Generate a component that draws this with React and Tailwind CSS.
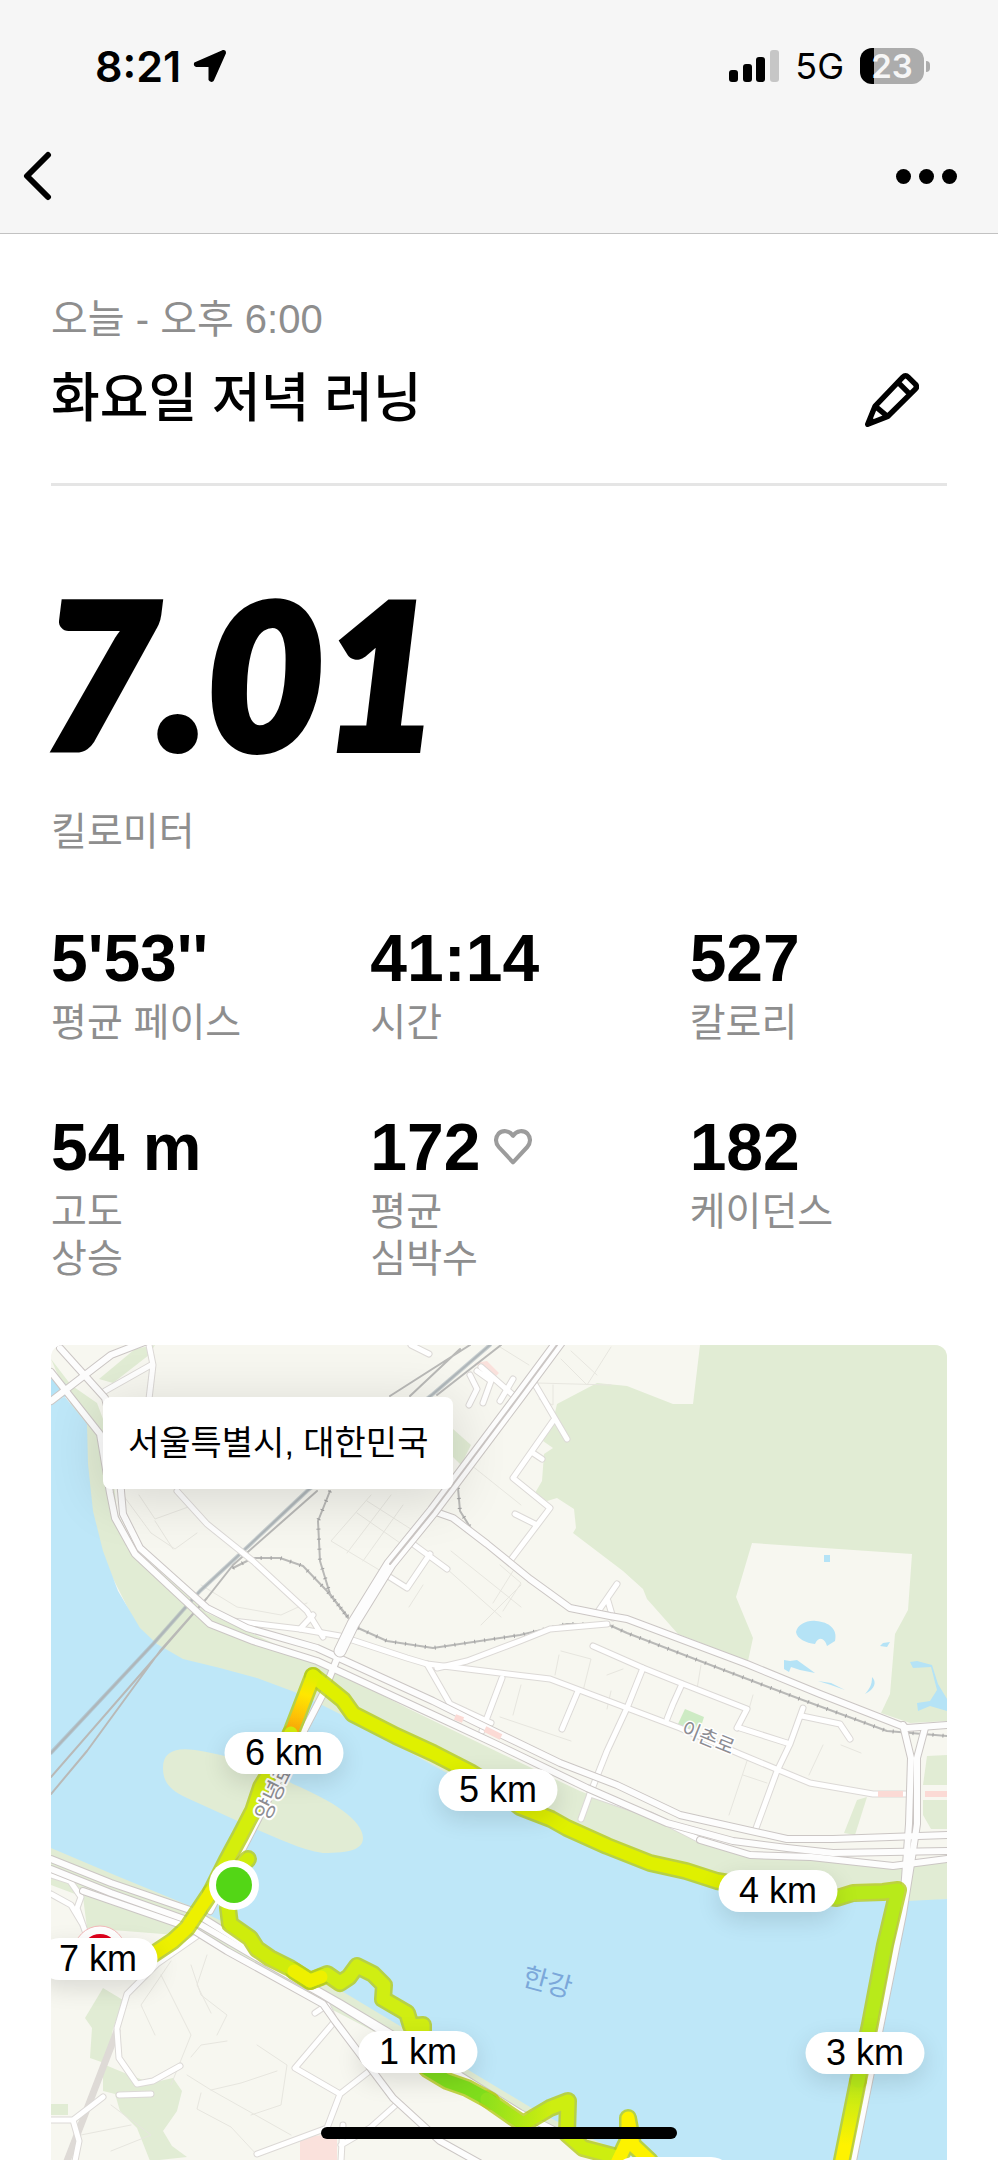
import React from 'react';

const MAP_WIDTH = 896;
const MAP_HEIGHT = 816;

const stats = [
  { value: "5'53''", label: ['평균 페이스'] },
  { value: '41:14', label: ['시간'] },
  { value: '527', label: ['칼로리'] },
  { value: '54 m', label: ['고도', '상승'] },
  { value: '172', label: ['평균', '심박수'], heart: true },
  { value: '182', label: ['케이던스'] },
];

// Kilometre markers, in map units
const markers = [
  { km: 1, x: 367, y: 707 },
  { km: 3, x: 814, y: 708 },
  { km: 4, x: 727, y: 546 },
  { km: 5, x: 447, y: 445 },
  { km: 6, x: 233, y: 408 },
  { km: 7, x: 47, y: 614 },
];

const parks = [
  'M649 0L642 59H622L576 41L546 38L506 59L502 76L492 96L502 103L493 109L491 136L484 148L496 156L506 153L523 164L525 183L522 188L572 226L592 244L596 254L627 289L697 316L702 293L685 252L701 198L861 209L857 265L844 289L839 349L830 368L859 378L896 376V0Z',
  'M0 14L20 40L46 58L58 90L66 168L86 206L156 268L222 298L279 323L356 363L449 408L529 446L649 493L699 509L842 521L896 514V554L856 558L666 545L516 490L356 410L249 355L132 318L89 287L30 170L20 60Z',
  'M48 34L84 4L104 0L98 10L62 38Z',
  'M402 84L420 100L410 120L400 110Z',
  'M0 500L66 526L140 556L202 586L236 610L349 678L469 752L566 806L560 812L440 762L349 700L280 664L150 592L36 583L32 552L0 540Z',
  'M52 643L72 655L62 684L56 719L39 713L41 683L34 673Z',
  'M52 719L76 729L100 738L122 733L131 746L126 766L112 786L121 801L136 812L99 816L86 783L69 766L64 749L52 746Z',
  'M0 759H17V770H0Z',
  'M876 411L896 410V484L880 484L872 470V455H896V440H872Z',
  'M806 455L816 452L804 490L793 488Z',
];

const smallStreets = [
  'M88 150L104 174L140 161M72 150L100 188L124 204L146 188M104 176L122 204M150 240L186 262L230 270L256 258',
  'M320 150L280 196L330 226L360 190M340 150L296 208M352 160L312 216M306 168L352 200M316 156L366 188',
  'M400 206L470 262M372 240L358 262M420 120L470 160M430 280L470 240M396 224L450 272',
  'M449 2L478 20M502 40V60L488 54M510 14L536 40L560 2M520 6L546 30M486 38L560 40',
  'M449 220L470 238L452 266M462 226L442 258M508 310L504 330M510 306L540 314L532 346M556 330L572 324',
  'M449 372L520 396M470 340L462 370M650 320L646 344M702 350L698 364M696 416L678 470M692 430L716 438',
  'M772 400L758 430M790 400L810 408M560 346L556 364M120 616L90 660L104 690M140 620L150 650L176 670L166 690',
  'M156 610L146 640L160 668M110 630L140 690L120 740M206 700L236 720L230 760L200 770M160 745L190 738L226 726',
  'M150 748L146 764L180 782L206 810M136 730L160 745L240 790M60 760L100 790L60 806M80 780L30 790M176 696L150 700L140 712',
];

const localRoads = [
  'M126 146L156 179L202 216L256 266L272 292M249 284L262 270',
  'M182 276L249 284L289 291L356 313L376 319L449 328L499 334L576 363L629 383L689 409L759 438L822 449H856',
  'M386 323L416 316L469 296L499 284L556 279',
  'M376 319L399 359L440 378M451 333L431 386',
  'M502 76L462 133L499 163L459 216M482 36L516 94M464 169L484 179M482 108L491 114',
  'M566 239L546 268M557 256L562 273M542 301L592 323L632 339L696 364L686 383',
  'M592 323L576 363L556 406L539 449L530 474M631 339L622 359L616 374M527 346L511 384',
  'M689 383L736 398M752 363L739 399L726 426L704 486M751 371L789 379L799 394',
  'M362 199L396 224M379 209L356 243L337 231M449 56L462 34',
  'M98 0L102 20L98 54M100 20L54 46M360 0L378 9M419 30L426 44L418 60M426 26L440 36L432 58M430 22L462 50',
  'M539 449L600 470L649 495M0 530L19 536L30 552L26 563L34 586M0 549L20 560L32 580',
  'M149 589L106 619L76 649L66 683M66 685L68 713L86 739L102 736L129 721M68 750L100 749M0 775H22L52 752M22 775L28 796L24 816',
  'M284 676L244 723L289 749L276 783L206 809M289 749L330 717M347 758L319 783L290 800M284 676L276 660L264 668M292 780L290 816',
];

const mainRoads = [
  'M0 56L60 10L96 -4M0 27L49 89L59 148L64 173L84 209L159 279L202 296L266 316L389 373L449 401L536 443L616 478L682 496L736 503L782 508L896 506',
  'M9 3L54 53L66 100L72 169L89 203L156 263L196 283L266 303L382 356L422 376L509 418L566 440L629 470L736 494H782L896 490',
  'M649 495L699 510L760 512L842 521L896 514',
  'M382 166L402 173L436 199L479 234L519 263L559 271L576 274L696 319L769 349L856 383L896 380',
  'M852 380L860 413L858 479L852 560M874 383L866 413V479L860 519L852 569L802 816',
  'M302 279L289 306L272 349L189 509L159 566',
  'M0 514L60 538L139 565L195 600L236 628L289 658L389 718L469 768L560 814',
  'M0 524L60 548L150 580L212 616L272 650L340 692L449 762',
  'M32 546L139 583L176 606L272 659L284 676L342 753L389 796L432 820',
];

const railways = [
  'M439 0L382 49L256 146L189 209L149 246L102 299L0 408',
  'M419 0L339 51M409 4L359 51M450 0L386 50',
  'M266 146L182 220L156 253L109 306L36 406L0 449M142 269L0 432',
  'M279 146L267 176L269 216L279 249L297 273',
  'M182 223L202 213H229L252 221L276 246L297 272',
  'M307 283L336 296L382 303L469 290L516 279L556 279L576 288L649 316L749 354L836 386L896 391',
  'M407 143L409 166L426 193',
];

const ponds = [
  'M773 210h6v7h-6Z',
  'M745 287C747 279 756 275 765 276C778 277 787 284 784 296L776 301C774 294 768 290 764 299C755 298 746 294 745 287Z',
  'M733 315L739 316L746 315L764 328L749 325L740 322L738 327L733 324Z',
  'M821 332C826 337 824 344 814 349C819 343 821 340 821 332Z',
  'M829 301L832 298L839 297L836 302Z',
  'M767 336L780 338L794 345L780 340Z',
  'M859 317L866 316L881 320L887 339L896 354V366L879 361L867 366L866 358L879 356L886 345L880 322L862 323Z',
  'M0 34L14 38L20 50L0 56Z',
];

// Each stretch of the run has its own pace colour
const route = [
  { d: 'M197 514L182 530L177 563L179 579L199 593L206 604L219 613L239 623L259 636', color: '#cfec0c' },
  { d: 'M259 636L276 629L289 638L298 632L306 621L322 629L333 640L332 654L356 668L360 681L372 680L372 720', color: '#d0ee12' },
  { d: 'M243 626L259 636L270 632', color: '#eef000' },
  { d: 'M376 724L396 736L416 743L440 756', color: '#7fdd1c' },
  { d: 'M436 754L456 768L472 779L499 763L517 756L516 789L532 803L566 812', color: 'url(#parkPace)' },
  { d: 'M566 818L577 795L577 773L582 800L599 816', color: '#fdf200' },
  { d: 'M788 830L807 736', color: 'url(#bridgePace)' },
  { d: 'M807 736L819 679L834 600L847 545L832 547L802 548L786 553L728 546', color: '#b8ea1a' },
  { d: 'M728 546L666 536L635 526L599 518L556 501L516 483L500 474L469 462L448 445L419 427L382 408L345 391L302 369L292 355L276 342L262 331', color: '#dff000' },
  { d: 'M262 331L240 388', color: 'url(#sprintPace)' },
  { d: 'M240 388L226 416L210 442L202 466L189 491L176 515L160 547', color: '#d4ee0c' },
  { d: 'M160 547L136 583L122 596L98 612', color: '#edf000' },
];

function StatusBar() {
  return (
    <div className="flex h-[132px] items-center justify-between pr-[68px] pl-[95px] font-[Inter,sans-serif]">
      <div className="flex items-center gap-3">
        <span className="text-[43px] leading-none font-semibold">8:21</span>
        <svg className="h-[34px] w-[34px]" viewBox="0 0 34 34">
          <path
            d="M30 2.500L2.500 14.500Q2 16 3.500 16.500H17V30.500Q18 32 19.500 31L31.500 4Q31.500 2 30 2.500Z"
            stroke="black"
            strokeWidth="3"
            strokeLinejoin="round"
          />
        </svg>
      </div>
      <div className="flex items-center">
        <svg className="h-[32px] w-[50px]" viewBox="0 0 50 32">
          <rect x="0" y="20" width="9" height="12" rx="3" />
          <rect x="14" y="14" width="9" height="18" rx="3" />
          <rect x="27" y="7" width="9" height="25" rx="3" />
          <rect x="41" y="0" width="9" height="32" rx="3" fill="#c6c6c6" />
        </svg>
        <span className="ml-4 text-[36px] leading-none">5G</span>
        <div className="ml-4 flex items-center gap-[2px]">
          <div className="flex h-9 w-16 items-center justify-center rounded-xl bg-linear-to-r from-black from-22% to-[#acacac] to-22% text-[33px] leading-none font-semibold text-[#f6f6f6]">
            23
          </div>
          <div className="h-[11px] w-1 rounded-r-full bg-[#acacac]"></div>
        </div>
      </div>
    </div>
  );
}

function NavBar() {
  return (
    <nav className="flex h-[88px] items-center justify-between pr-[41px] pl-[23px]">
      <button aria-label="뒤로">
        <svg className="h-[50px] w-[30px]" viewBox="0 0 30 50" fill="none" stroke="black" strokeWidth="6" strokeLinecap="round" strokeLinejoin="round">
          <path d="M25 4L4 25L25 46" />
        </svg>
      </button>
      <button aria-label="더보기" className="flex gap-2">
        <span className="size-[15px] rounded-full bg-black"></span>
        <span className="size-[15px] rounded-full bg-black"></span>
        <span className="size-[15px] rounded-full bg-black"></span>
      </button>
    </nav>
  );
}

function Stat({ stat }) {
  return (
    <div>
      <div className="flex items-center gap-3.5 text-[66px] leading-[82px] font-bold">
        {stat.value}
        {stat.heart && (
          <svg className="h-[36px] w-[38px]" viewBox="0 0 112 106" fill="none" stroke="#9c9c9c" strokeWidth="12" strokeLinejoin="round">
            <path d="M56 20C46 4 25 2 13 14C3 25 4 42 14 53L56 98L98 53C108 42 109 25 99 14C87 2 66 4 56 20Z" />
          </svg>
        )}
      </div>
      {stat.label.map((line) => (
        <div key={line} className="text-[39px] leading-[47px] text-[#8e8e8e]">
          {line}
        </div>
      ))}
    </div>
  );
}

function MapDrawing() {
  return (
    <svg className="block w-full" viewBox={`0 0 ${MAP_WIDTH} ${MAP_HEIGHT}`} fill="none" strokeLinejoin="round" strokeLinecap="round">
      <defs>
        <linearGradient id="bridgePace" gradientUnits="userSpaceOnUse" x1="790" y1="816" x2="807" y2="736">
          <stop offset="0.200" stopColor="#fff200" />
          <stop offset="1" stopColor="#b8ea1a" />
        </linearGradient>
        <linearGradient id="sprintPace" gradientUnits="userSpaceOnUse" x1="262" y1="331" x2="244" y2="386">
          <stop offset="0" stopColor="#dff000" />
          <stop offset="0.350" stopColor="#ffe600" />
          <stop offset="1" stopColor="#fbaa0a" />
        </linearGradient>
        <linearGradient id="parkPace" gradientUnits="userSpaceOnUse" x1="436" y1="754" x2="500" y2="763">
          <stop offset="0" stopColor="#8fe01c" />
          <stop offset="1" stopColor="#cdee10" />
        </linearGradient>
      </defs>

      <rect width={MAP_WIDTH} height={MAP_HEIGHT} fill="#f7f7f0" />
      {parks.map((d) => (
        <path key={d} d={d} fill="#e1ecd4" />
      ))}
      <path d="M626 381L634 364L653 372L648 388Z" fill="#cdebc4" />
      <path d="M249 793L286 788V816H249ZM424 18L436 16L448 28L442 34Z" fill="#fae1dc" />

      {/* Han river */}
      <path
        d="M0 56L14 52L36 79L37 119L42 166L52 206L67 246L89 283L106 299L132 314L169 323L206 333L249 349L289 369L356 406L469 468L516 488L592 519L666 541L786 556L856 556L896 554V816H590L566 806L489 768L389 708L349 681L289 645L236 615L202 591L139 561L66 531L0 503Z"
        fill="#bee7f8"
      />
      {ponds.map((d) => (
        <path key={d} d={d} fill="#b5e3f6" />
      ))}
      <path
        d="M112 423C112 408 122 402 144 405C190 412 220 426 242 439C280 455 312 475 312 493C312 504 300 508 272 508C250 505 225 492 202 483L136 453C118 445 112 436 112 423Z"
        fill="#e1ecd4"
      />

      {smallStreets.map((d) => (
        <path key={d} d={d} stroke="#e7e6df" strokeWidth="1" />
      ))}
      <path d="M66 686L16 816" stroke="#dedad6" strokeWidth="7" />
      {railways.map((d) => (
        <path key={d} d={d} stroke="#b9b9b7" strokeWidth="2" />
      ))}
      <path d={railways[0]} stroke="#a9b4ba" strokeOpacity="0.600" strokeWidth="4" />
      {railways.slice(3).map((d) => (
        <path key={d} d={d} stroke="#a3a3a3" strokeWidth="4" strokeDasharray="1 9" strokeLinecap="butt" />
      ))}
      {localRoads.map((d) => (
        <path key={d} d={d} stroke="#dcd9d6" strokeWidth="7" />
      ))}
      {localRoads.map((d) => (
        <path key={d} d={d} stroke="#ffffff" strokeWidth="5" />
      ))}
      {mainRoads.map((d) => (
        <path key={d} d={d} stroke="#cbc6c4" strokeWidth="8" />
      ))}
      {mainRoads.map((d) => (
        <path key={d} d={d} stroke="#fdfdfd" strokeWidth="6" />
      ))}
      <path d="M289 306L302 279L339 219L382 166L469 50L509 -4" stroke="#cbc6c4" strokeWidth="13" />
      <path d="M289 306L302 279L339 219L382 166L469 50L509 -4" stroke="#fdfdfd" strokeWidth="11" />
      <path d="M339 219L382 166L469 50L509 -4" stroke="#cbc6c4" strokeWidth="2" />
      <path d="M827 449H852M874 449H896M404 372L412 375M434 384L450 392" stroke="#fbdad5" strokeWidth="6" strokeLinecap="butt" />

      <g fontFamily="'Noto Sans CJK KR', sans-serif">
        <text transform="translate(629 389) rotate(22)" fontSize="20" fill="#8d8d93" stroke="#ffffff" strokeWidth="3" paintOrder="stroke">
          이촌로
        </text>
        <text transform="translate(470 640) rotate(15)" fontSize="27" fill="#7ba8da">
          한강
        </text>
      </g>

      <circle cx="49" cy="607" r="26" fill="#ffffff" stroke="#f3b9b9" strokeWidth="1" />
      <circle cx="49" cy="607" r="18" fill="#e0001b" />

      {route.map((part) => (
        <path key={part.d} d={part.d} stroke="#b4ca1c" strokeOpacity="0.800" strokeWidth="18" />
      ))}
      {route.map((part) => (
        <path key={part.d} d={part.d} stroke={part.color} strokeWidth="13" />
      ))}

      <text transform="translate(217 477) rotate(-64)" fontSize="22" fontFamily="'Noto Sans CJK KR', sans-serif" fill="#8d8d93" stroke="#ffffff" strokeWidth="4" paintOrder="stroke">
        양녕로
      </text>
      <circle cx="183" cy="540" r="25" fill="#ffffff" />
      <circle cx="183" cy="540" r="18" fill="#53d616" />

      {/* Top of the next marker, below the fold */}
      <rect x="562" y="812" width="119" height="42" rx="21" fill="#ffffff" />
    </svg>
  );
}

function RouteMap() {
  return (
    <section className="relative mt-[63px] overflow-hidden rounded-t-xl">
      <MapDrawing />
      {markers.map((marker) => (
        <div
          key={marker.km}
          className="absolute flex h-[42px] w-[119px] -translate-x-1/2 -translate-y-1/2 items-center justify-center rounded-full bg-white text-[36px] leading-none shadow-[0_8px_24px_rgba(0,0,0,0.12)]"
          style={{
            left: `${(marker.x / MAP_WIDTH) * 100}%`,
            top: `${(marker.y / MAP_HEIGHT) * 100}%`,
          }}
        >
          {marker.km} km
        </div>
      ))}
      <div className="absolute top-[52px] left-[52px] flex h-[92px] items-center rounded-lg bg-white px-[25px] text-[34px] shadow-[0_8px_56px_rgba(0,0,0,0.14)]">
        서울특별시, 대한민국
      </div>
    </section>
  );
}

export default function App() {
  return (
    <div className="min-h-screen bg-white font-['Liberation_Sans','Noto_Sans_CJK_KR',sans-serif] text-black">
      <header className="border-b border-[#c2c2c2] bg-[#f6f6f6] pb-[13px]">
        <StatusBar />
        <NavBar />
      </header>

      <main className="px-[51px] pt-[57px]">
        <div className="flex items-end justify-between border-b-[3px] border-[#e5e5e5] pb-[52px]">
          <div>
            <p className="text-[40px] leading-[56px] text-[#8e8e8e]">오늘 - 오후 6:00</p>
            <h1 className="mt-5 text-[53px] leading-[64px] font-medium">화요일 저녁 러닝</h1>
          </div>
          <button aria-label="이름 편집" className="mr-7 mb-1">
            <svg className="size-[54px]" viewBox="0 0 160 160" fill="none" stroke="black" strokeWidth="16" strokeLinejoin="round">
              <path d="M8 152L30 98L112 12Q120 4 128 12L149 33Q156 41 149 48L67 129ZM30 98L67 129M98 28L132 62" />
              <path d="M8 152L18 128L32 143Z" fill="black" stroke="none" />
            </svg>
          </button>
        </div>

        <div className="mt-[106px] -ml-2 font-[Lato,sans-serif] text-[200px] leading-[160px] font-black italic [-webkit-text-stroke:8px_black]">
          7.01
        </div>
        <div className="mt-14 text-[39px] leading-[47px] text-[#8e8e8e]">킬로미터</div>

        <div className="mt-[62px] grid grid-cols-3 gap-x-[62px] gap-y-[60px]">
          {stats.map((stat) => (
            <Stat key={stat.value} stat={stat} />
          ))}
        </div>

        <RouteMap />
      </main>

      <div className="fixed bottom-[21px] left-1/2 h-3 w-[356px] -translate-x-1/2 rounded-full bg-black"></div>
    </div>
  );
}
